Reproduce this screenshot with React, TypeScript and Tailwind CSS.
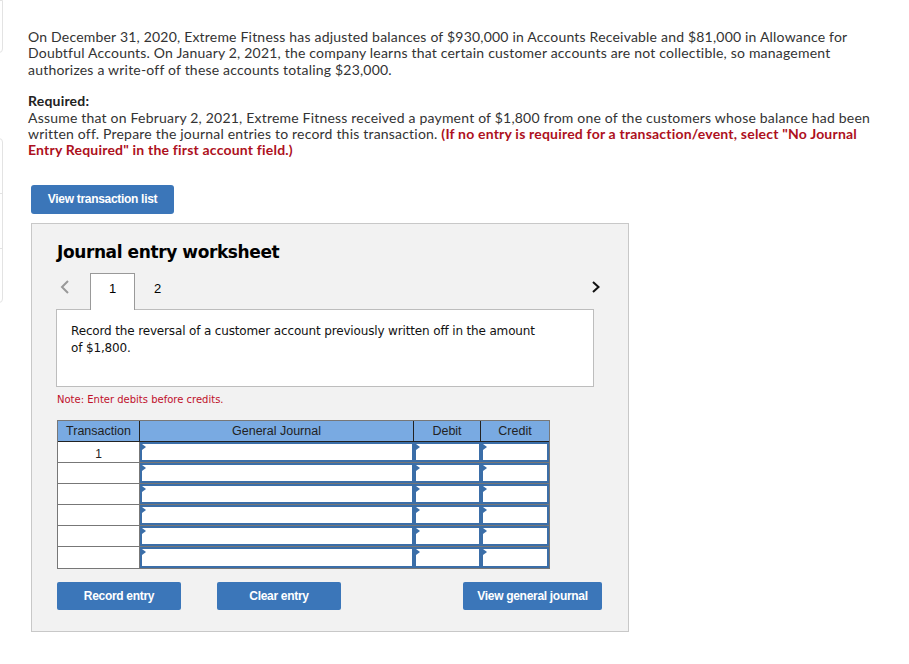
import React from "react";

function InputCell({ w }: { w: string }) {
  return (
    <div className={`relative h-full border-2 border-[#3b6ea8] bg-white ${w}`}>
      <div className="absolute left-0 top-0 h-0 w-0 border-t-[3px] border-b-[3px] border-l-[4px] border-t-transparent border-b-transparent border-l-[#3b6ea8]" />
    </div>
  );
}

export default function App() {
  const rows = [0, 1, 2, 3, 4, 5];
  return (
    <div className="relative min-h-[664px] w-[909px] bg-white">
      {/* left edge faint boxes */}
      <div className="absolute left-[-6px] top-0 h-[53px] w-[9px] rounded-br-sm border border-[#e3e3e3]" />
      <div className="absolute left-[-6px] top-[138px] flex h-[165px] w-[9px] flex-col rounded-r-sm border border-[#e3e3e3]">
        <div className="h-[55px] border-b border-[#e3e3e3]" />
        <div className="h-[55px] border-b border-[#e3e3e3]" />
      </div>

      <div className="whitespace-nowrap px-[28px] pt-[29px] font-['Lato',sans-serif] text-[14px] leading-[16.4px] tracking-[0.2px] text-[#333]">
        <p>
          On December 31, 2020, Extreme Fitness has adjusted balances of $930,000 in Accounts Receivable and $81,000 in Allowance for
          <br />
          Doubtful Accounts. On January 2, 2021, the company learns that certain customer accounts are not collectible, so management
          <br />
          authorizes a write-off of these accounts totaling $23,000.
        </p>
        <p className="mt-[15px] font-bold text-[#222]">Required:</p>
        <p>
          Assume that on February 2, 2021, Extreme Fitness received a payment of $1,800 from one of the customers whose balance had been
          <br />
          written off. Prepare the journal entries to record this transaction.{" "}
          <span className="font-bold text-[#ad1020]">
            (If no entry is required for a transaction/event, select "No Journal
            <br />
            Entry Required" in the first account field.)
          </span>
        </p>
      </div>

      <div className="ml-[31px] mt-[26px]">
        <button className="h-[29px] w-[143px] rounded-[3px] bg-[#3b76b9] font-['Liberation_Sans',Arial,sans-serif] text-[12px] font-bold tracking-[-0.3px] text-white">
          View transaction list
        </button>
      </div>

      <div className="ml-[31px] mt-[9px] w-[598px] border border-[#c8c8c8] bg-[#f2f2f2] pb-[21px]">
        <h2 className="ml-[25px] mt-[16px] font-['DejaVu_Sans',Verdana,sans-serif] text-[17px] font-bold leading-[24px] tracking-[-0.4px] text-black">
          Journal entry worksheet
        </h2>

        <div className="mt-[9px] flex items-end">
          <div className="ml-[28px] flex h-[37px] w-[30px] items-start pt-[6px]">
            <svg width="10" height="16" viewBox="0 0 10 16">
              <path d="M8 2 L2 8 L8 14" stroke="#999" strokeWidth="2" fill="none" />
            </svg>
          </div>
          <div className="relative z-10 flex h-[37px] w-[45px] items-start justify-center border border-b-0 border-[#999] bg-white pt-[5px] font-['Liberation_Sans',Arial,sans-serif] text-[13px] text-black">
            1
          </div>
          <div className="flex h-[37px] w-[45px] items-start justify-center pt-[6px] font-['Liberation_Sans',Arial,sans-serif] text-[13px] text-black">
            2
          </div>
          <div className="ml-auto mr-[27px] flex h-[37px] items-start pt-[7px]">
            <svg width="10" height="14" viewBox="0 0 10 14">
              <path d="M2 2 L7.5 7 L2 12" stroke="#111" strokeWidth="2" fill="none" />
            </svg>
          </div>
        </div>

        <div className="ml-[24px] mt-[-1px] h-[78px] w-[538px] border border-[#bdbdbd] bg-white px-[14px] pt-[13px] font-['DejaVu_Sans',Verdana,sans-serif] text-[12px] leading-[17px] tracking-[-0.15px] text-[#111]">
          Record the reversal of a customer account previously written off in the amount
          <br />
          of $1,800.
        </div>

        <p className="ml-[25px] mt-[7px] font-['DejaVu_Sans',Verdana,sans-serif] text-[10px] leading-[12px] text-[#c0102a]">
          Note: Enter debits before credits.
        </p>

        <div className="ml-[25px] mt-[14px] w-[493px] border border-[#777] font-['Liberation_Sans',Arial,sans-serif] text-[12.5px] text-[#222]">
          <div className="flex h-[21px] border-b border-[#222] bg-[#79aae2]">
            <div className="flex w-[82px] items-center justify-center border-r border-[#222] pt-[1px]">Transaction</div>
            <div className="flex w-[274px] items-center justify-center border-r border-[#222] pt-[1px]">General Journal</div>
            <div className="flex w-[67px] items-center justify-center border-r border-[#222] pt-[1px]">Debit</div>
            <div className="flex flex-1 items-center justify-center pt-[1px]">Credit</div>
          </div>
          {rows.map((r) => (
            <div key={r} className={`flex h-[21px] bg-white ${r < 5 ? "border-b border-[#777]" : ""}`}>
              <div className="flex w-[82px] items-start justify-center border-r border-[#777] pt-[3px] text-[12px]">{r === 0 ? "1" : ""}</div>
              <InputCell w="w-[274px]" />
              <InputCell w="w-[67px]" />
              <InputCell w="flex-1" />
            </div>
          ))}
        </div>

        <div className="ml-[25px] mt-[13px] flex font-['Liberation_Sans',Arial,sans-serif] text-[12px] font-bold tracking-[-0.3px] text-white">
          <button className="h-[28px] w-[124px] rounded-[2px] bg-[#3b76b9]">Record entry</button>
          <button className="ml-[36px] h-[28px] w-[124px] rounded-[2px] bg-[#3b76b9]">Clear entry</button>
          <button className="ml-[122px] h-[28px] w-[139px] rounded-[2px] bg-[#3b76b9]">View general journal</button>
        </div>
      </div>
    </div>
  );
}
